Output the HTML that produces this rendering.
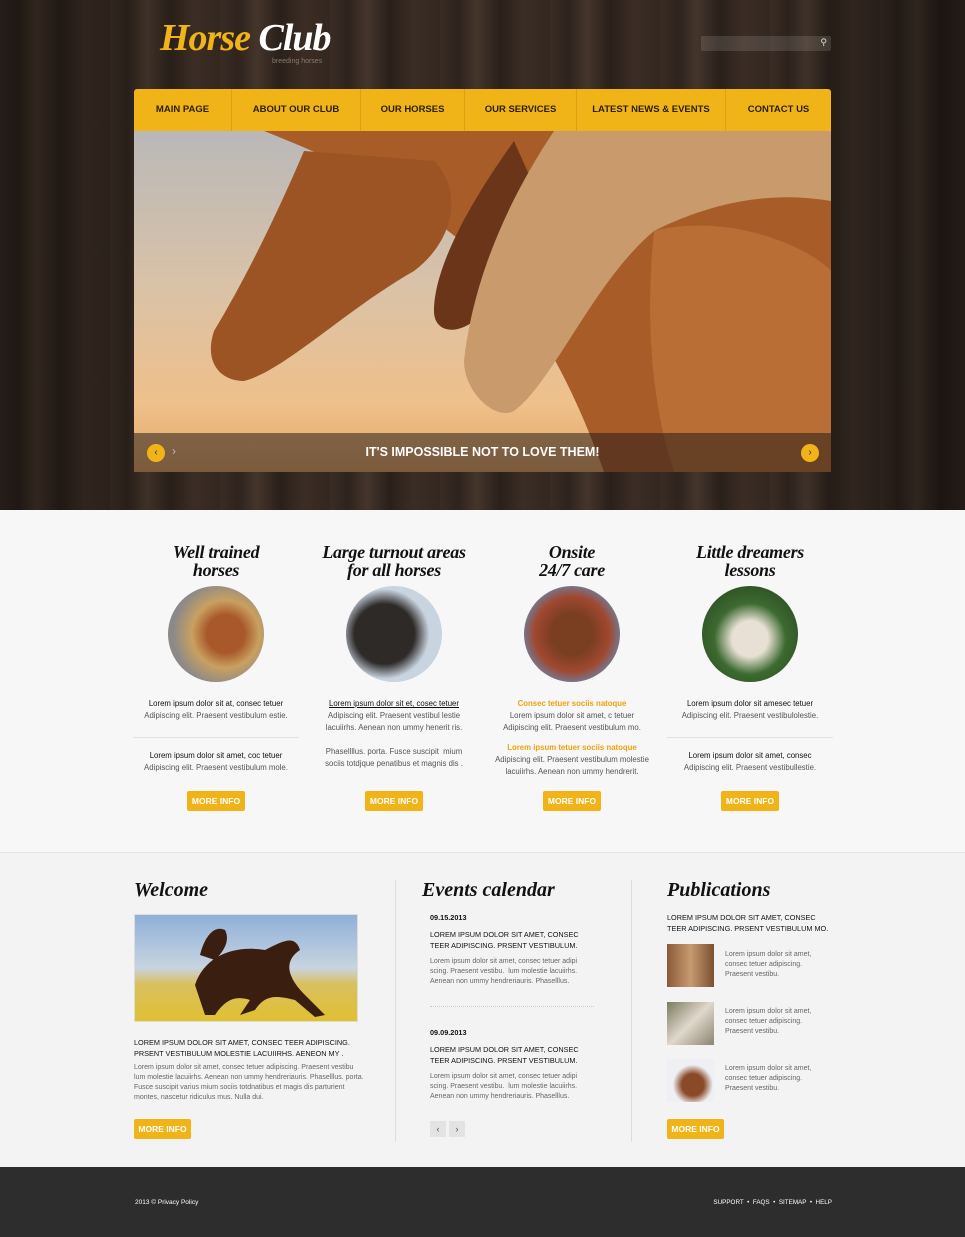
<!DOCTYPE html>
<html><head><meta charset="utf-8"><style>
*{margin:0;padding:0;box-sizing:border-box}
body{width:965px;height:1237px;font-family:"Liberation Sans","DejaVu Sans",sans-serif;background:#f7f7f7;position:relative;overflow:hidden}
.abs{position:absolute}
.head{left:0;top:0;width:965px;height:510px;background:repeating-linear-gradient(90deg,#3a2c24 0,#2e231d 18px,#44352b 37px,#2a201a 60px,#3b2d24 84px,#332720 110px);}
.head:after{content:"";position:absolute;inset:0;background:linear-gradient(90deg,rgba(0,0,0,.35),rgba(0,0,0,0) 20%,rgba(0,0,0,0) 80%,rgba(0,0,0,.4))}
.script{font-family:"Liberation Serif",serif;font-style:italic;font-weight:bold}
.nav{left:134px;top:89px;width:697px;height:42px;background:#f0b418;border-radius:3px 3px 0 0;z-index:2;display:flex}
.nav div{height:42px;line-height:42px;font-size:9.5px;font-weight:bold;color:#2a2000;text-align:center;border-right:1px solid #dca212}
.slide{left:134px;top:131px;width:697px;height:341px;z-index:2;overflow:hidden;background:linear-gradient(180deg,#b9b8b9 0%,#d9c2a8 45%,#efc08a 80%,#e3a868 100%)}
.btn{background:#f0b418;color:#fff;font-size:8.5px;font-weight:bold;text-align:center;line-height:20px;height:20px;border-radius:2px}
.ft h3{font-family:"Liberation Serif",serif;font-style:italic;font-size:18px;line-height:18px;text-align:center;color:#111;font-weight:bold;white-space:nowrap;letter-spacing:-.3px}
.ft p{font-size:7.8px;line-height:12px;text-align:center;color:#555;white-space:nowrap}
.ft b{color:#111;font-weight:normal}
.circ{width:96px;height:96px;border-radius:50%}
.sec2{left:0;top:852px;width:965px;height:315px;background:#f3f3f3;border-top:1px solid #e6e6e6}
.h2{font-family:"Liberation Serif",serif;font-style:italic;font-weight:bold;font-size:20px;color:#111}
.cap{font-size:7.3px;line-height:11px;color:#111}
.txt{font-size:7px;line-height:10px;color:#666}
</style></head><body>
<div class="abs head"></div>
<div class="abs script" style="left:160px;top:16px;font-size:38px;color:#f0b418;z-index:3;letter-spacing:-1px">Horse <span style="color:#fff">Club</span></div>
<div class="abs" style="left:272px;top:58px;font-size:7px;color:#8a7a70;z-index:3">breeding horses</div>
<div class="abs" style="left:701px;top:36px;width:130px;height:15px;background:rgba(255,255,255,.12);border-radius:2px;z-index:3"><span style="position:absolute;right:4px;top:1px;color:#ddd;font-size:9px">⚲</span></div>
<div class="abs nav">
<div style="width:98px">MAIN PAGE</div><div style="width:129px">ABOUT OUR CLUB</div><div style="width:104px">OUR HORSES</div><div style="width:112px">OUR SERVICES</div><div style="width:149px">LATEST NEWS &amp; EVENTS</div><div style="width:105px;border:none">CONTACT US</div></div>
<div class="abs slide">
<svg width="697" height="341" style="position:absolute;left:0;top:0">
<path d="M130 0 C180 20 230 40 300 90 C360 130 420 200 470 341 L697 341 L697 0 Z" fill="#a85c28"/>
<path d="M170 20 C140 90 110 150 80 200 C70 230 85 250 110 250 C150 240 210 180 280 140 C320 110 330 60 300 30 Z" fill="#9c5424"/>
<path d="M380 10 C330 80 300 140 300 180 C300 200 320 205 340 190 C370 170 390 130 420 100 Z" fill="#6a3518"/>
<path d="M420 0 C380 60 340 140 330 230 C330 260 360 290 380 280 C420 250 460 150 520 100 C580 70 640 60 697 70 L697 0 Z" fill="#c99a6c"/>
<path d="M520 100 C600 80 680 120 697 140 L697 341 L540 341 C520 280 510 200 520 100Z" fill="#b86e34"/>
</svg>
<div style="position:absolute;left:0;top:302px;width:697px;height:39px;background:rgba(40,30,25,.55)"></div>
<div style="position:absolute;left:0;top:314px;width:697px;text-align:center;color:#fff;font-weight:bold;font-size:12.5px">IT'S IMPOSSIBLE NOT TO LOVE THEM!</div>
<div style="position:absolute;left:13px;top:313px;width:18px;height:18px;border-radius:50%;background:#f0b418;color:#333;font-size:10px;text-align:center;line-height:18px">‹</div>
<div style="position:absolute;left:38px;top:313px;color:#bbb;font-size:12px">›</div>
<div style="position:absolute;left:667px;top:313px;width:18px;height:18px;border-radius:50%;background:#f0b418;color:#333;font-size:10px;text-align:center;line-height:18px">›</div>
</div>

<div class="abs ft" style="left:136px;top:543px;width:160px"><h3>Well trained<br>horses</h3>
<div class="circ" style="margin:7px auto 0;background:radial-gradient(circle at 60% 50%,#a8582a 25%,#c9a060 45%,#8c8a88 70%)"></div>
<p style="margin-top:16px"><b>Lorem ipsum dolor sit at, consec tetuer</b><br>Adipiscing elit. Praesent vestibulum estie.</p>
<div style="border-top:1px solid #e3e3e3;margin:15px -3px 0"></div>
<p style="margin-top:12px"><b>Lorem ipsum dolor sit amet, coc tetuer</b><br>Adipiscing elit. Praesent vestibulum mole.</p>
<div class="btn" style="width:58px;margin:17px auto 0">MORE INFO</div></div>

<div class="abs ft" style="left:314px;top:543px;width:160px"><h3>Large turnout areas<br>for all horses</h3>
<div class="circ" style="margin:7px auto 0;background:radial-gradient(circle at 40% 50%,#2e2a28 40%,#c8d4e0 60%)"></div>
<p style="margin-top:16px"><b style="text-decoration:underline">Lorem ipsum dolor sit et, cosec tetuer</b><br>Adipiscing elit. Praesent vestibul lestie<br>lacuiirhs. Aenean non ummy henerit ris.</p>
<p style="margin-top:12px">Phasellllus. porta. Fusce suscipit &nbsp;mium<br>sociis totdjque penatibus et magnis dis .</p>
<div class="btn" style="width:58px;margin:21px auto 0">MORE INFO</div></div>

<div class="abs ft" style="left:492px;top:543px;width:160px"><h3>Onsite<br>24/7 care</h3>
<div class="circ" style="margin:7px auto 0;background:radial-gradient(circle at 50% 50%,#7a3e20 30%,#a04830 55%,#6e80a0 75%)"></div>
<p style="margin-top:16px"><b style="color:#f0a010;font-weight:bold">Consec tetuer sociis natoque</b><br>Lorem ipsum dolor sit amet, c tetuer<br>Adipiscing elit. Praesent vestibulum mo.</p>
<p style="margin-top:8px"><b style="color:#f0a010;font-weight:bold">Lorem ipsum tetuer sociis natoque</b><br>Adipiscing elit. Praesent vestibulum molestie<br>lacuiirhs. Aenean non ummy hendrerit.</p>
<div class="btn" style="width:58px;margin:13px auto 0">MORE INFO</div></div>

<div class="abs ft" style="left:670px;top:543px;width:160px"><h3>Little dreamers<br>lessons</h3>
<div class="circ" style="margin:7px auto 0;background:radial-gradient(circle at 50% 55%,#e8e0d4 25%,#3c6a30 50%,#2e5024 80%)"></div>
<p style="margin-top:16px"><b>Lorem ipsum dolor sit amesec tetuer</b><br>Adipiscing elit. Praesent vestibulolestie.</p>
<div style="border-top:1px solid #e3e3e3;margin:15px -3px 0"></div>
<p style="margin-top:12px"><b>Lorem ipsum dolor sit amet, consec</b><br>Adipiscing elit. Praesent vestibullestie.</p>
<div class="btn" style="width:58px;margin:17px auto 0">MORE INFO</div></div>

<div class="abs sec2"></div>
<div class="abs" style="left:395px;top:880px;width:1px;height:262px;background:#ddd"></div>
<div class="abs" style="left:631px;top:880px;width:1px;height:262px;background:#ddd"></div>

<div class="abs h2" style="left:134px;top:879px">Welcome</div>
<div class="abs" style="left:134px;top:914px;width:224px;height:108px;background:linear-gradient(180deg,#8fb0d8 0%,#c8d4e0 50%,#d8c060 65%,#e0c030 100%);border:1px solid #ddd"><svg width="224" height="108"><path d="M60 70 C70 40 100 30 130 35 C150 25 160 20 165 35 C150 45 150 60 170 80 L190 100 L180 102 L160 85 C140 80 130 80 120 95 L105 100 L115 85 C100 80 90 85 80 100 L70 100 Z M65 40 C70 20 80 10 90 15 C95 25 90 35 80 45Z" fill="#3a1e10"/></svg></div>
<div class="abs cap" style="left:134px;top:1037px;width:230px">LOREM IPSUM DOLOR SIT AMET, CONSEC TEER ADIPISCING.<br>PRSENT VESTIBULUM MOLESTIE LACUIIRHS. AENEON MY .</div>
<div class="abs txt" style="left:134px;top:1063px;width:230px">Lorem ipsum dolor sit amet, consec tetuer adipiscing. Praesent vestibu lum molestie lacuiirhs. Aenean non ummy hendreriauris. Phaselllus. porta. Fusce suscipit varius mium sociis totdnatibus et magis dis parturient montes, nascetur ridiculus mus. Nulla dui.</div>
<div class="abs btn" style="left:134px;top:1119px;width:57px">MORE INFO</div>

<div class="abs h2" style="left:422px;top:879px">Events calendar</div>
<div class="abs cap" style="left:430px;top:912px;font-weight:bold">09.15.2013</div>
<div class="abs cap" style="left:430px;top:929px;width:175px">LOREM IPSUM DOLOR SIT AMET, CONSEC<br>TEER ADIPISCING. PRSENT VESTIBULUM.</div>
<div class="abs txt" style="left:430px;top:957px;width:175px">Lorem ipsum dolor sit amet, consec tetuer adipi<br>scing. Praesent vestibu. &nbsp;lum molestie lacuiirhs.<br>Aenean non ummy hendreriauris. Phaselllus.</div>
<div class="abs" style="left:430px;top:1006px;width:164px;border-top:1px dotted #ccc"></div>
<div class="abs cap" style="left:430px;top:1027px;font-weight:bold">09.09.2013</div>
<div class="abs cap" style="left:430px;top:1044px;width:175px">LOREM IPSUM DOLOR SIT AMET, CONSEC<br>TEER ADIPISCING. PRSENT VESTIBULUM.</div>
<div class="abs txt" style="left:430px;top:1072px;width:175px">Lorem ipsum dolor sit amet, consec tetuer adipi<br>scing. Praesent vestibu. &nbsp;lum molestie lacuiirhs.<br>Aenean non ummy hendreriauris. Phaselllus.</div>
<div class="abs" style="left:430px;top:1121px;width:16px;height:16px;background:#e3e3e3;font-size:9px;text-align:center;line-height:16px;color:#555">‹</div>
<div class="abs" style="left:449px;top:1121px;width:16px;height:16px;background:#e3e3e3;font-size:9px;text-align:center;line-height:16px;color:#555">›</div>

<div class="abs h2" style="left:667px;top:879px">Publications</div>
<div class="abs cap" style="left:667px;top:912px;width:175px">LOREM IPSUM DOLOR SIT AMET, CONSEC<br>TEER ADIPISCING. PRSENT VESTIBULUM MO.</div>
<div class="abs" style="left:667px;top:944px;width:47px;height:43px;background:linear-gradient(90deg,#8a5a38,#c89a70,#7a5030)"></div>
<div class="abs txt" style="left:725px;top:950px;width:100px">Lorem ipsum dolor sit amet, consec tetuer adipiscing. Praesent vestibu.</div>
<div class="abs" style="left:667px;top:1002px;width:47px;height:43px;background:linear-gradient(135deg,#7a7a60,#e0d8cc 50%,#8a8470)"></div>
<div class="abs txt" style="left:725px;top:1007px;width:100px">Lorem ipsum dolor sit amet, consec tetuer adipiscing. Praesent vestibu.</div>
<div class="abs" style="left:667px;top:1059px;width:47px;height:43px;background:radial-gradient(circle at 55% 60%,#8a4a28 30%,#eef0f4 55%)"></div>
<div class="abs txt" style="left:725px;top:1064px;width:100px">Lorem ipsum dolor sit amet, consec tetuer adipiscing. Praesent vestibu.</div>
<div class="abs btn" style="left:667px;top:1119px;width:57px">MORE INFO</div>

<div class="abs" style="left:0;top:1167px;width:965px;height:70px;background:#2d2d2d"></div>
<div class="abs" style="left:135px;top:1199px;color:#fff;font-size:6.5px">2013 © Privacy Policy</div>
<div class="abs" style="left:700px;top:1199px;width:132px;text-align:right;white-space:nowrap;color:#fff;font-size:6.3px">SUPPORT &nbsp;•&nbsp; FAQS &nbsp;•&nbsp; SITEMAP &nbsp;•&nbsp; HELP</div>
</body></html>
